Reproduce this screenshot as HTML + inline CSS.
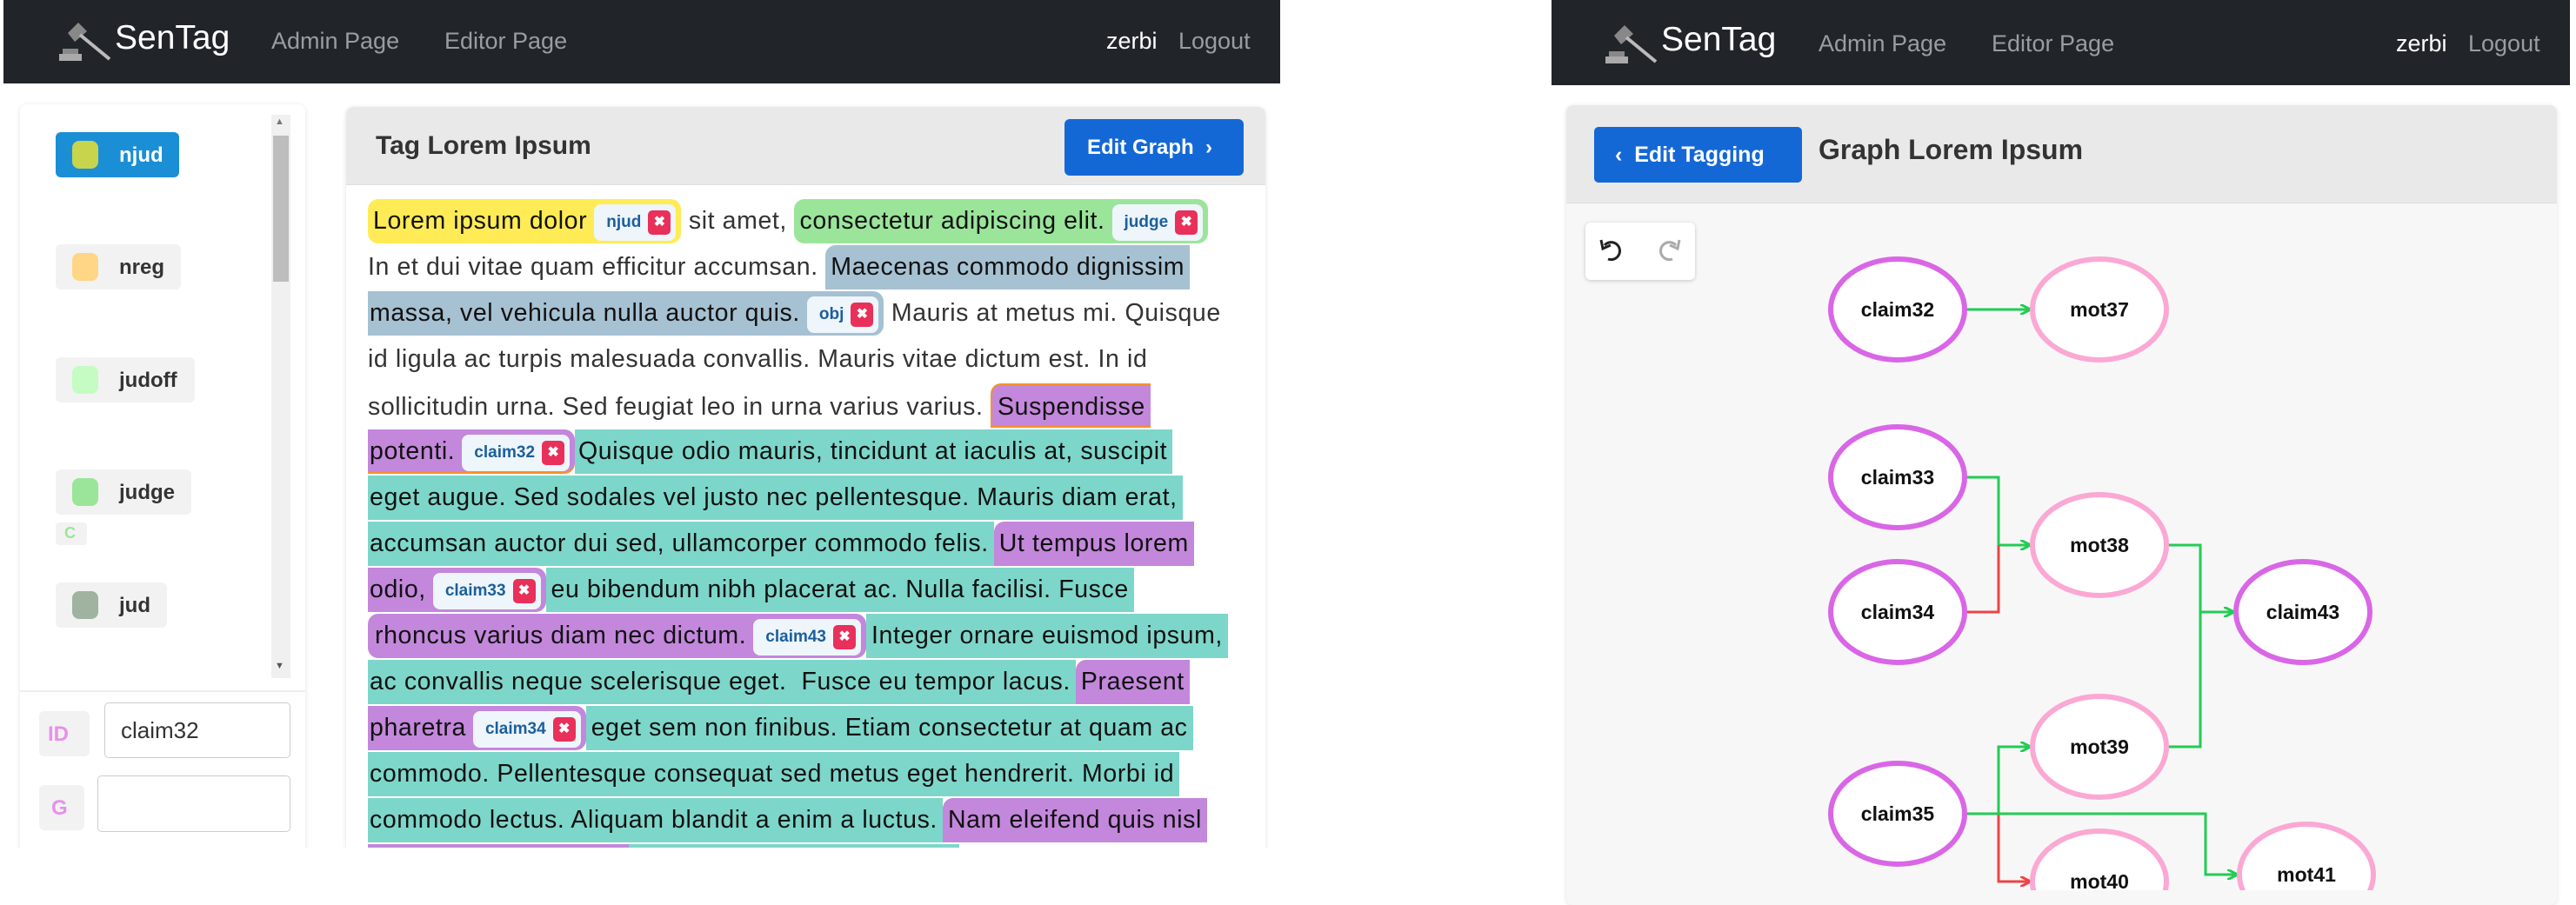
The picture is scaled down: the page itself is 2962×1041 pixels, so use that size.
<!DOCTYPE html>
<html><head><meta charset="utf-8"><style>
*{box-sizing:border-box;margin:0;padding:0}
body{width:2962px;height:1024px;background:#fff;position:relative;overflow:hidden;font-family:"Liberation Sans",Arial,sans-serif}
.nav{position:absolute;top:0;height:96px;background:#212529;color:#9a9da0;font-size:27px}
.nav span{position:absolute;top:32px}
.nav .brand{color:#fff;font-size:39px;top:22px}
.nav .user{color:#fff}
.card{position:absolute;background:#fff;box-shadow:0 1px 6px rgba(0,0,0,.12);border-radius:8px}
.tagbtn{position:absolute;left:64px;height:52px;background:#f2f2f2;border-radius:6px;font-weight:bold;font-size:24px;color:#333}
.tagbtn i{position:absolute;left:19px;top:10px;width:30px;height:32px;border-radius:8px}
.tagbtn b{position:absolute;left:73px;top:13px}
.lines{position:absolute;left:423px;top:229px}
.ln{position:absolute;left:0;height:53px;white-space:nowrap;font-size:28.5px;letter-spacing:.6px;color:#333;line-height:51px}
.ln span{display:inline-block;height:51px;padding:0 6px;border-radius:12px;color:#111}
.y{background:#ffeb55}.g{background:#9be59a}.b{background:#a6c1d2}.p{background:#c387dc}.t{background:#7dd6ca}
.sq{border-radius:0!important}
.ln span.chip{display:inline-block;background:#eef5fb;border-radius:8px;height:42px;line-height:42px;padding:0 6px 0 14px;font-size:19px;letter-spacing:0;font-weight:bold;color:#1b5f9c;vertical-align:2px;margin-left:8px}
.chip em{display:inline-block;font-style:normal;background:#e8305a;color:#fff;width:26px;height:28px;line-height:28px;text-align:center;border-radius:5px;margin-left:8px;font-size:16px;vertical-align:1px}
</style></head><body>

<!-- LEFT APP -->
<div class="nav" style="left:4px;width:1468px">
<svg style="position:absolute;left:62px;top:22px" width="70" height="50" viewBox="0 0 70 50"><rect x="2" y="40" width="26" height="8" fill="#aaa"/><rect x="6" y="34" width="18" height="6" fill="#888"/><path d="M24 4 L34 14 L20 26 L12 16 Z" fill="#888"/><path d="M26 18 L60 46" stroke="#bbb" stroke-width="4"/></svg>
<span class="brand" style="left:128px">SenTag</span>
<span style="left:308px">Admin Page</span>
<span style="left:507px">Editor Page</span>
<span class="user" style="left:1268px">zerbi</span>
<span style="left:1351px">Logout</span>
</div>

<div class="card" style="left:23px;top:120px;width:328px;height:870px">
<div style="position:absolute;left:289px;top:12px;width:22px;height:648px;background:#f0f0f0"></div>
<div style="position:absolute;left:291px;top:36px;width:18px;height:168px;background:#bdbdbd"></div>
<div style="position:absolute;left:293px;top:14px;font-size:11px;color:#777">▲</div>
<div style="position:absolute;left:293px;top:640px;font-size:11px;color:#555">▼</div>
<div style="position:absolute;left:0;top:674px;width:328px;height:2px;background:#eee"></div>
<div style="position:absolute;left:22px;top:698px;width:58px;height:52px;background:#f2f2f2;border-radius:6px;color:#e890e8;font-size:24px;font-weight:bold;padding:13px 0 0 10px">ID</div>
<div style="position:absolute;left:97px;top:688px;width:214px;height:64px;border:1px solid #ccc;border-radius:5px;font-size:26px;color:#333;padding:16px 0 0 18px">claim32</div>
<div style="position:absolute;left:22px;top:783px;width:52px;height:52px;background:#f2f2f2;border-radius:6px;color:#e890e8;font-size:24px;font-weight:bold;padding:13px 0 0 14px">G</div>
<div style="position:absolute;left:89px;top:772px;width:222px;height:65px;border:1px solid #ccc;border-radius:5px"></div>
</div>
<div class="tagbtn" style="top:152px;width:142px;background:#1a8fd6;color:#fff"><i style="background:#c8d44c"></i><b>njud</b></div>
<div class="tagbtn" style="top:281px;width:144px"><i style="background:#ffd586"></i><b>nreg</b></div>
<div class="tagbtn" style="top:411px;width:160px"><i style="background:#c4fcc4"></i><b>judoff</b></div>
<div class="tagbtn" style="top:540px;width:156px"><i style="background:#9be59a"></i><b>judge</b></div>
<div style="position:absolute;left:64px;top:601px;width:36px;height:26px;background:#f2f2f2;border-radius:4px;color:#9be59a;font-size:18px;font-weight:bold;padding:2px 0 0 10px">C</div>
<div class="tagbtn" style="top:670px;width:128px"><i style="background:#9fb3a0"></i><b>jud</b></div>

<div class="card" style="left:398px;top:123px;width:1057px;height:870px;overflow:hidden">
<div style="position:absolute;left:0;top:0;width:100%;height:90px;background:#e9e9e9;border-bottom:1px solid #ddd"></div>
<div style="position:absolute;left:34px;top:28px;font-size:30px;font-weight:bold;color:#333">Tag Lorem Ipsum</div>
<div style="position:absolute;left:826px;top:14px;width:206px;height:65px;background:#1468d6;border-radius:6px;color:#fff;font-size:24px;font-weight:bold;padding:19px 0 0 26px">Edit Graph &nbsp;›</div>
</div>

<div class="lines">
<div class="ln" style="top:0"><span class="y">Lorem ipsum dolor<span class="chip">njud<em>✖</em></span></span> sit amet, <span class="g">consectetur adipiscing elit.<span class="chip">judge<em>✖</em></span></span></div>
<div class="ln" style="top:53px">In et dui vitae quam efficitur accumsan. <span class="b" style="border-radius:12px 0 0 0">Maecenas commodo dignissim</span></div>
<div class="ln" style="top:106px"><span class="b" style="border-radius:0 12px 12px 0;padding-left:2px">massa, vel vehicula nulla auctor quis.<span class="chip">obj<em>✖</em></span></span> Mauris at metus mi. Quisque</div>
<div class="ln" style="top:159px">id ligula ac turpis malesuada convallis. Mauris vitae dictum est. In id</div>
<div class="ln" style="top:212px">sollicitudin urna. Sed feugiat leo in urna varius varius. <span class="p" style="border-radius:12px 0 0 0;border:2px solid #f4922e;border-right:0">Suspendisse</span></div>
<div class="ln" style="top:265px"><span class="p" style="border-radius:0 12px 12px 0;padding-left:2px;border-bottom:3px solid #f4922e">potenti.<span class="chip">claim32<em>✖</em></span></span><span class="t sq" style="padding-left:4px">Quisque odio mauris, tincidunt at iaculis at, suscipit</span></div>
<div class="ln" style="top:318px"><span class="t sq" style="padding-left:2px">eget augue. Sed sodales vel justo nec pellentesque. Mauris diam erat,</span></div>
<div class="ln" style="top:371px"><span class="t sq" style="padding-left:2px">accumsan auctor dui sed, ullamcorper commodo felis.</span><span class="p" style="border-radius:12px 0 0 0">Ut tempus lorem</span></div>
<div class="ln" style="top:424px"><span class="p" style="border-radius:0 12px 12px 0;padding-left:2px">odio,<span class="chip">claim33<em>✖</em></span></span><span class="t sq">eu bibendum nibh placerat ac. Nulla facilisi. Fusce</span></div>
<div class="ln" style="top:477px"><span class="p" style="padding-left:8px">rhoncus varius diam nec dictum.<span class="chip">claim43<em>✖</em></span></span><span class="t sq">Integer ornare euismod ipsum,</span></div>
<div class="ln" style="top:530px"><span class="t sq" style="padding-left:2px">ac convallis neque scelerisque eget. &nbsp;Fusce eu tempor lacus.</span><span class="p" style="border-radius:12px 0 0 0">Praesent</span></div>
<div class="ln" style="top:583px"><span class="p" style="border-radius:0 12px 12px 0;padding-left:2px">pharetra<span class="chip">claim34<em>✖</em></span></span><span class="t sq">eget sem non finibus. Etiam consectetur at quam ac</span></div>
<div class="ln" style="top:636px"><span class="t sq" style="padding-left:2px">commodo. Pellentesque consequat sed metus eget hendrerit. Morbi id</span></div>
<div class="ln" style="top:689px"><span class="t sq" style="padding-left:2px">commodo lectus. Aliquam blandit a enim a luctus.</span><span class="p" style="border-radius:12px 0 0 0">Nam eleifend quis nisl</span></div>
<div class="ln" style="top:742px"><span class="p sq" style="width:300px"></span><span class="t sq" style="width:380px"></span></div>
</div>
<div style="position:absolute;left:0;top:975px;width:1480px;height:49px;background:#fff"></div>

<!-- RIGHT APP -->
<div class="nav" style="left:1784px;width:1171px;height:98px">
<svg style="position:absolute;left:60px;top:25px" width="70" height="50" viewBox="0 0 70 50"><rect x="2" y="40" width="26" height="8" fill="#aaa"/><rect x="6" y="34" width="18" height="6" fill="#888"/><path d="M24 4 L34 14 L20 26 L12 16 Z" fill="#888"/><path d="M26 18 L60 46" stroke="#bbb" stroke-width="4"/></svg>
<span class="brand" style="left:126px;top:24px">SenTag</span>
<span style="left:307px;top:35px">Admin Page</span>
<span style="left:506px;top:35px">Editor Page</span>
<span class="user" style="left:971px;top:35px">zerbi</span>
<span style="left:1054px;top:35px">Logout</span>
</div>
<div class="card" style="left:1801px;top:121px;width:1139px;height:920px;background:#f7f7f7;overflow:hidden">
<div style="position:absolute;left:0;top:0;width:100%;height:113px;background:#e9e9e9;border-bottom:1px solid #ddd"></div>
<div style="position:absolute;left:32px;top:25px;width:239px;height:64px;background:#1468d6;border-radius:5px;color:#fff;font-size:25px;font-weight:bold;padding:18px 0 0 24px">‹ &nbsp;Edit Tagging</div>
<div style="position:absolute;left:290px;top:33px;font-size:32px;font-weight:bold;color:#333">Graph Lorem Ipsum</div>
<div style="position:absolute;left:22px;top:135px;width:126px;height:66px;background:#fff;border-radius:6px;box-shadow:0 1px 5px rgba(0,0,0,.2)">
<svg width="126" height="66" viewBox="0 0 126 66"><path d="M22 26 A10 10 0 1 1 26 42" fill="none" stroke="#222" stroke-width="3"/><path d="M18 20 L20 30 L29 26" fill="none" stroke="#222" stroke-width="3"/><path d="M104 26 A10 10 0 1 0 100 42" fill="none" stroke="#aaa" stroke-width="3"/><path d="M108 20 L106 30 L97 26" fill="none" stroke="#aaa" stroke-width="3"/></svg>
</div>
</div>
<svg style="position:absolute;left:0;top:0" width="2962" height="1024">
<defs><marker id="ag" markerWidth="12" markerHeight="12" refX="11" refY="6" orient="auto" markerUnits="userSpaceOnUse"><path d="M0 0 L12 6 L0 12" fill="none" stroke="#22cc55" stroke-width="3"/></marker>
<marker id="ar" markerWidth="12" markerHeight="12" refX="11" refY="6" orient="auto" markerUnits="userSpaceOnUse"><path d="M0 0 L12 6 L0 12" fill="none" stroke="#ee4444" stroke-width="3"/></marker></defs>
<g fill="none" stroke-width="3">
<path d="M2260 356 H2334" stroke="#22cc55" marker-end="url(#ag)"/>
<path d="M2260 549 H2298 V627 H2334" stroke="#22cc55" marker-end="url(#ag)"/>
<path d="M2260 704 H2298 V627" stroke="#ee4444"/>
<path d="M2492 627 H2530 V704 H2568" stroke="#22cc55" marker-end="url(#ag)"/>
<path d="M2492 859 H2530 V704" stroke="#22cc55"/>
<path d="M2260 936 H2298 V859 H2334" stroke="#22cc55" marker-end="url(#ag)"/>
<path d="M2298 936 V1014 H2334" stroke="#ee4444" marker-end="url(#ar)"/>
<path d="M2260 936 H2536 V1006 H2572" stroke="#22cc55" marker-end="url(#ag)"/>
</g>
<g stroke-width="6" fill="#fff" font-family="Liberation Sans,Arial,sans-serif" font-weight="bold" font-size="23" text-anchor="middle">
<ellipse cx="2182" cy="356" rx="77" ry="58" stroke="#d966e6"/><text x="2182" y="364" stroke="none" fill="#111">claim32</text>
<ellipse cx="2414" cy="356" rx="77" ry="58" stroke="#fba8d4"/><text x="2414" y="364" stroke="none" fill="#111">mot37</text>
<ellipse cx="2182" cy="549" rx="77" ry="58" stroke="#d966e6"/><text x="2182" y="557" stroke="none" fill="#111">claim33</text>
<ellipse cx="2414" cy="627" rx="77" ry="58" stroke="#fba8d4"/><text x="2414" y="635" stroke="none" fill="#111">mot38</text>
<ellipse cx="2182" cy="704" rx="77" ry="58" stroke="#d966e6"/><text x="2182" y="712" stroke="none" fill="#111">claim34</text>
<ellipse cx="2648" cy="704" rx="77" ry="58" stroke="#d966e6"/><text x="2648" y="712" stroke="none" fill="#111">claim43</text>
<ellipse cx="2414" cy="859" rx="77" ry="58" stroke="#fba8d4"/><text x="2414" y="867" stroke="none" fill="#111">mot39</text>
<ellipse cx="2182" cy="936" rx="77" ry="58" stroke="#d966e6"/><text x="2182" y="944" stroke="none" fill="#111">claim35</text>
<ellipse cx="2414" cy="1014" rx="77" ry="58" stroke="#fba8d4"/><text x="2414" y="1022" stroke="none" fill="#111">mot40</text>
<ellipse cx="2652" cy="1006" rx="77" ry="58" stroke="#fba8d4"/><text x="2652" y="1014" stroke="none" fill="#111">mot41</text>
</g>
</svg>
</body></html>
